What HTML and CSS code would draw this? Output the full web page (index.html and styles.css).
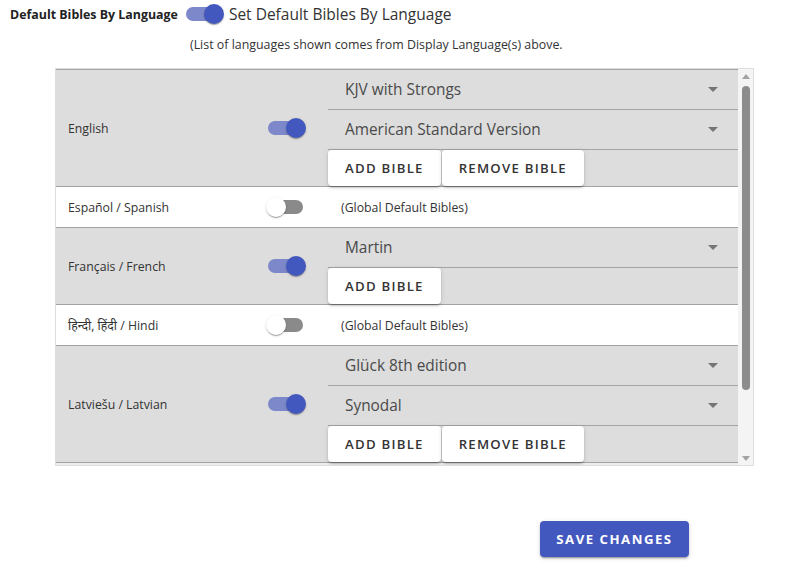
FILE: index.html
```html
<!DOCTYPE html>
<html>
<head>
<meta charset="utf-8">
<link rel="stylesheet" href="styles.css">
</head>
<body>
<div class="page">
  <div class="header">
    <span class="title">Default Bibles By Language</span>
    <span class="switch on"><span class="track"></span><span class="knob"></span></span>
    <span class="switch-label">Set Default Bibles By Language</span>
  </div>
  <p class="note">(List of languages shown comes from Display Language(s) above.</p>

  <div class="panel">
    <div class="list">
      <div class="row grey">
        <div class="lang">English</div>
        <div class="tog"><span class="switch on"><span class="track"></span><span class="knob"></span></span></div>
        <div class="bibles">
          <div class="select"><span>KJV with Strongs</span><i class="caret"></i></div>
          <div class="select"><span>American Standard Version</span><i class="caret"></i></div>
          <div class="actions"><button class="btn">ADD BIBLE</button><button class="btn">REMOVE BIBLE</button></div>
        </div>
      </div>
      <div class="row">
        <div class="lang">Español / Spanish</div>
        <div class="tog"><span class="switch"><span class="track"></span><span class="knob"></span></span></div>
        <div class="global">(Global Default Bibles)</div>
      </div>
      <div class="row grey">
        <div class="lang">Français / French</div>
        <div class="tog"><span class="switch on"><span class="track"></span><span class="knob"></span></span></div>
        <div class="bibles">
          <div class="select"><span>Martin</span><i class="caret"></i></div>
          <div class="actions"><button class="btn">ADD BIBLE</button></div>
        </div>
      </div>
      <div class="row">
        <div class="lang">हिन्दी, हिंदी / Hindi</div>
        <div class="tog"><span class="switch"><span class="track"></span><span class="knob"></span></span></div>
        <div class="global">(Global Default Bibles)</div>
      </div>
      <div class="row grey">
        <div class="lang">Latviešu / Latvian</div>
        <div class="tog"><span class="switch on"><span class="track"></span><span class="knob"></span></span></div>
        <div class="bibles">
          <div class="select"><span>Glück 8th edition</span><i class="caret"></i></div>
          <div class="select"><span>Synodal</span><i class="caret"></i></div>
          <div class="actions"><button class="btn">ADD BIBLE</button><button class="btn">REMOVE BIBLE</button></div>
        </div>
      </div>
    </div>
    <div class="scrollbar">
      <div class="sb-arrow"><i class="tri-up"></i></div>
      <div class="sb-track"><div class="sb-thumb"></div></div>
      <div class="sb-arrow"><i class="tri-down"></i></div>
    </div>
  </div>

  <div class="footer">
    <button class="save">SAVE CHANGES</button>
  </div>
</div>
</body>
</html>
```
FILE: styles.css
```css
html, body {
  margin: 0;
  padding: 0;
  background: #ffffff;
}
body {
  font-family: "Open Sans", "Noto Sans", "Noto Sans Devanagari", "Liberation Sans", sans-serif;
  color: #222;
}
.page {
  width: 794px;
  height: 567px;
  overflow: hidden;
}
.header {
  display: flex;
  align-items: center;
  height: 20px;
  margin-top: 4px;
  padding-left: 10px;
}
.title {
  font-size: 12.4px;
  font-weight: 700;
  color: #222;
}
.header .switch {
  margin-left: 6px;
  margin-right: 5px;
}
.switch-label {
  font-size: 15.5px;
  color: #333;
}
.note {
  margin: 13px 0 0 190px;
  font-size: 12.4px;
  line-height: 16px;
  color: #333;
}

/* switch */
.switch {
  display: inline-grid;
  width: 40px;
  height: 20px;
  flex: none;
}
.switch .track,
.switch .knob {
  grid-area: 1 / 1;
}
.switch .track {
  margin: 3px;
  border-radius: 7px;
  background: #8a8a8a;
}
.switch .knob {
  width: 20px;
  height: 20px;
  border-radius: 50%;
  background: #ffffff;
  justify-self: start;
  box-shadow: 0 2px 1px -1px rgba(0,0,0,0.2), 0 1px 1px 0 rgba(0,0,0,0.14), 0 1px 3px 0 rgba(0,0,0,0.12);
}
.switch.on .track {
  background: #7c88c9;
  margin: 3px 4px 3px 2px;
}
.switch.on .knob {
  background: #4258be;
  justify-self: end;
}

/* panel */
.panel {
  margin: 15px 0 0 55px;
  width: 697px;
  height: 396px;
  border: 1px solid #dedede;
  display: flex;
}
.list {
  flex: 1;
  overflow: hidden;
  border-top: 1px solid #a3a3a3;
  background: #ececec;
}
.row {
  display: grid;
  grid-template-columns: 208px 64px 1fr;
  align-items: center;
  border-bottom: 1px solid #a3a3a3;
  min-height: 40px;
  background: #ffffff;
}
.row.grey {
  background: #dddddd;
}
.lang {
  padding-left: 12px;
  font-size: 12.3px;
  color: #333;
}
.tog {
  padding-left: 2px;
  display: flex;
}
.global {
  padding-left: 13px;
  font-size: 12.3px;
  color: #333;
}
.bibles {
  display: flex;
  flex-direction: column;
  align-self: stretch;
}
.select {
  height: 39px;
  border-bottom: 1px solid #a3a3a3;
  display: flex;
  align-items: center;
  justify-content: space-between;
  padding: 0 20px 0 17px;
  font-size: 15.4px;
  color: #4a4a4a;
}
.caret {
  width: 0;
  height: 0;
  border-left: 5px solid transparent;
  border-right: 5px solid transparent;
  border-top: 5px solid #757575;
}
.actions {
  display: flex;
  height: 36px;
}
.btn {
  height: 36px;
  border: none;
  border-radius: 4px;
  background: #ffffff;
  padding: 0 17px;
  margin: 0 1px 0 0;
  font-family: inherit;
  font-size: 13.2px;
  font-weight: 600;
  letter-spacing: 1.25px;
  color: #333;
  box-shadow: 0 3px 1px -2px rgba(0,0,0,0.2), 0 2px 2px 0 rgba(0,0,0,0.14), 0 1px 5px 0 rgba(0,0,0,0.12);
}

/* scrollbar */
.scrollbar {
  width: 15px;
  flex: none;
  background: #f4f4f4;
  display: flex;
  flex-direction: column;
}
.sb-arrow {
  height: 14px;
  display: flex;
  align-items: center;
  justify-content: center;
}
.tri-up {
  width: 0;
  height: 0;
  border-left: 4px solid transparent;
  border-right: 4px solid transparent;
  border-bottom: 5px solid #a3a3a3;
}
.tri-down {
  width: 0;
  height: 0;
  border-left: 4px solid transparent;
  border-right: 4px solid transparent;
  border-top: 5px solid #a3a3a3;
}
.sb-track {
  flex: 1;
  display: flex;
  justify-content: center;
  padding-top: 3px;
}
.sb-thumb {
  width: 8px;
  height: 304px;
  border-radius: 4px;
  background: #8c8c8c;
}

/* footer */
.footer {
  margin: 55px 0 0 540px;
}
.save {
  width: 149px;
  height: 36px;
  border: none;
  border-radius: 4px;
  background: #4358be;
  color: #ffffff;
  font-family: inherit;
  font-size: 13.2px;
  font-weight: 700;
  letter-spacing: 1.5px;
  box-shadow: 0 3px 1px -2px rgba(0,0,0,0.2), 0 2px 2px 0 rgba(0,0,0,0.14), 0 1px 5px 0 rgba(0,0,0,0.12);
}
```
